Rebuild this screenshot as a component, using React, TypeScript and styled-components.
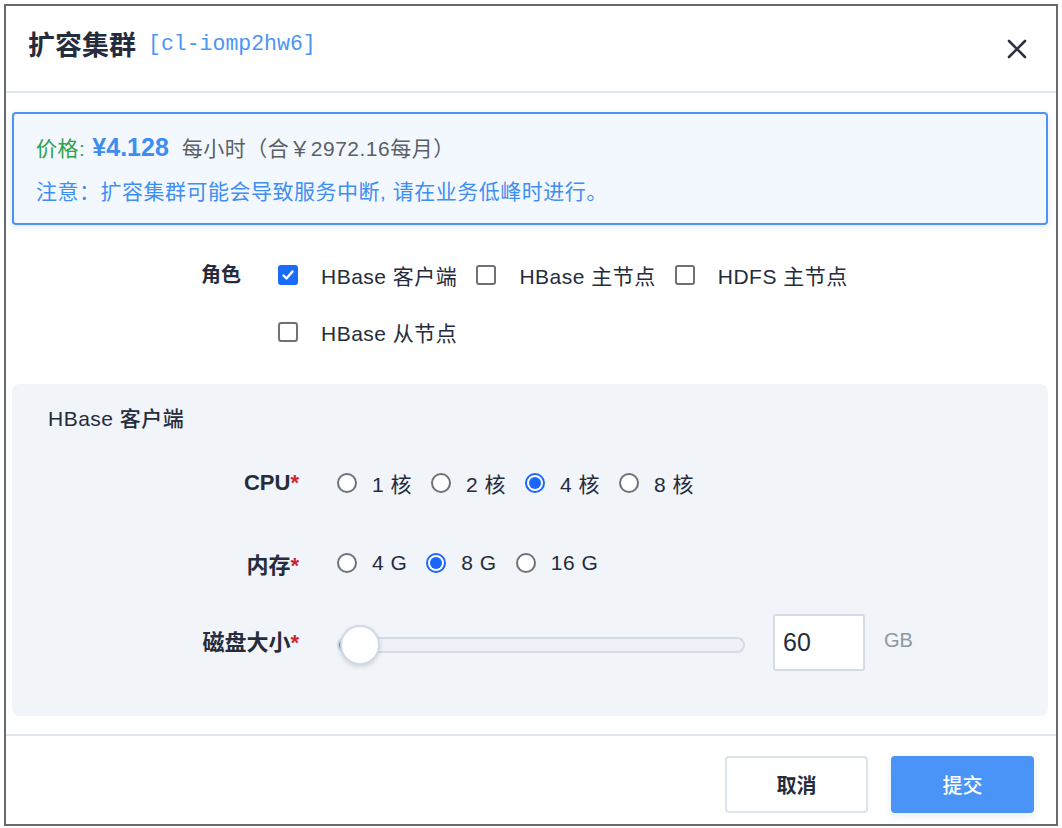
import styled, { createGlobalStyle } from "styled-components";

const GlobalStyle = createGlobalStyle`
  body {
    margin: 0;
    background: #fff;
    font-family: "Liberation Sans", "Noto Sans CJK SC", sans-serif;
    color: #252c3b;
  }
  * { box-sizing: border-box; }
`;

const roles = [
  { name: "HBase 客户端", checked: true },
  { name: "HBase 主节点", checked: false },
  { name: "HDFS 主节点", checked: false },
  { name: "HBase 从节点", checked: false },
];

const cpus = ["1 核", "2 核", "4 核", "8 核"];
const mems = ["4 G", "8 G", "16 G"];

function App() {
  return (
    <Page>
      <GlobalStyle />
      <Modal>
        <Header>
          <Title>
            扩容集群 <ClusterId>[cl-iomp2hw6]</ClusterId>
          </Title>
          <CloseButton>
            <svg width="20" height="20" viewBox="0 0 20 20">
              <path d="M2 2L18 18M18 2L2 18" stroke="#2b3242" strokeWidth="2.6" strokeLinecap="round" />
            </svg>
          </CloseButton>
        </Header>

        <Body>
          <Alert>
            <AlertLine>
              <PriceLabel>价格:</PriceLabel>
              <Price>¥4.128</Price>
              <PriceNote>每小时（合￥2972.16每月）</PriceNote>
            </AlertLine>
            <AlertLine>
              <Notice>注意：扩容集群可能会导致服务中断, 请在业务低峰时进行。</Notice>
            </AlertLine>
          </Alert>

          <RoleRow>
            <RoleLabel>角色</RoleLabel>
            <RoleOptions>
              {roles.map((r) => (
                <CheckOption key={r.name}>
                  <CheckBox $checked={r.checked}>
                    {r.checked ? (
                      <svg width="16" height="16" viewBox="0 0 16 16">
                        <path d="M3.5 8.5l3 3L12.5 4.5" stroke="#fff" strokeWidth="2.4" fill="none" strokeLinecap="round" strokeLinejoin="round" />
                      </svg>
                    ) : null}
                  </CheckBox>
                  <OptionText>{r.name}</OptionText>
                </CheckOption>
              ))}
            </RoleOptions>
          </RoleRow>

          <Panel>
            <PanelTitle>HBase 客户端</PanelTitle>

            <FormRow $mt={28} $h={50}>
              <FieldLabel>
                CPU<Star>*</Star>
              </FieldLabel>
              <Controls>
                {cpus.map((c) => (
                  <RadioOption key={c}>
                    <Radio $checked={c === "4 核"} />
                    <OptionText>{c}</OptionText>
                  </RadioOption>
                ))}
              </Controls>
            </FormRow>

            <FormRow $mt={30} $h={50}>
              <FieldLabel>
                内存<Star>*</Star>
              </FieldLabel>
              <Controls>
                {mems.map((m) => (
                  <RadioOption key={m}>
                    <Radio $checked={m === "8 G"} />
                    <OptionText>{m}</OptionText>
                  </RadioOption>
                ))}
              </Controls>
            </FormRow>

            <FormRow $mt={26} $h={57}>
              <FieldLabel $lift>
                磁盘大小<Star>*</Star>
              </FieldLabel>
              <Controls>
                <Track>
                  <TrackFill />
                  <Thumb />
                </Track>
                <SizeInput readOnly value="60" />
                <Unit>GB</Unit>
              </Controls>
            </FormRow>
          </Panel>
        </Body>

        <Footer>
          <Button>取消</Button>
          <Button $primary>提交</Button>
        </Footer>
      </Modal>
    </Page>
  );
}

const Page = styled.div`
  padding: 4px;
`;

const Modal = styled.div`
  width: 1054px;
  height: 822px;
  border: 2px solid #676a71;
  background: #fff;
  display: flex;
  flex-direction: column;
`;

const Header = styled.div`
  height: 87px;
  padding: 0 29px 0 22px;
  display: flex;
  align-items: center;
  justify-content: space-between;
  border-bottom: 2px solid #e0e6ee;
`;

const Title = styled.div`
  font-size: 27px;
  font-weight: 700;
  color: #252c3b;
  display: flex;
  align-items: center;
  gap: 12px;
  margin-bottom: 10px;
`;

const ClusterId = styled.span`
  font-family: "Liberation Mono", monospace;
  font-size: 21.5px;
  font-weight: 400;
  color: #4b95f5;
`;

const CloseButton = styled.div`
  width: 20px;
  height: 20px;
  display: flex;
`;

const Body = styled.div`
  padding: 19px 8px 18px 6px;
`;

const Alert = styled.div`
  border: 2px solid #4a94f7;
  border-radius: 4px;
  background: #f3f8ff;
  box-shadow: 0 2px 6px rgba(40, 60, 90, 0.12);
  padding: 18px 22px;
  display: flex;
  flex-direction: column;
  gap: 13px;
`;

const AlertLine = styled.div`
  height: 30px;
  display: flex;
  align-items: center;
  font-size: 21px;
  letter-spacing: 0.5px;
`;

const PriceLabel = styled.span`
  color: #2fa24c;
`;

const Price = styled.span`
  color: #3d8ef0;
  font-size: 25px;
  font-weight: 700;
  letter-spacing: 0;
  margin: 0 13px 0 7px;
`;

const PriceNote = styled.span`
  color: #5b5f66;
`;

const Notice = styled.span`
  color: #3f8ef4;
`;

const RoleRow = styled.div`
  display: flex;
  margin-top: 31px;
`;

const RoleLabel = styled.div`
  width: 229px;
  text-align: right;
  line-height: 38px;
  font-size: 20px;
  font-weight: 700;
  margin-right: 37px;
`;

const RoleOptions = styled.div`
  width: 610px;
  display: flex;
  flex-wrap: wrap;
  row-gap: 19px;
`;

const CheckOption = styled.div`
  height: 38px;
  display: flex;
  align-items: center;
  gap: 23px;
  margin-right: 19px;
`;

const CheckBox = styled.div<{ $checked?: boolean }>`
  width: 20px;
  height: 20px;
  border-radius: 3px;
  border: 2px solid ${(p) => (p.$checked ? "#1a6bf5" : "#6e7178")};
  background: ${(p) => (p.$checked ? "#1a6bf5" : "#fff")};
  display: flex;
  align-items: center;
  justify-content: center;
`;

const OptionText = styled.span`
  font-size: 21px;
  letter-spacing: 0.5px;
  color: #252c3b;
  white-space: nowrap;
`;

const Panel = styled.div`
  margin-top: 33px;
  height: 332px;
  background: #f1f4f9;
  border-radius: 8px;
  padding-top: 24px;
`;

const PanelTitle = styled.div`
  padding-left: 36px;
  font-size: 21px;
  letter-spacing: 0.5px;
  line-height: 22px;
  font-weight: 500;
`;

const FormRow = styled.div<{ $mt: number; $h: number }>`
  margin-top: ${(p) => p.$mt}px;
  height: ${(p) => p.$h}px;
  display: flex;
  align-items: center;
`;

const FieldLabel = styled.div<{ $lift?: boolean }>`
  width: 287px;
  text-align: right;
  font-size: 22px;
  font-weight: 700;
  margin-right: 38px;
  margin-bottom: ${(p) => (p.$lift ? "5px" : "0")};
`;

const Star = styled.span`
  color: #c8262b;
`;

const Controls = styled.div`
  display: flex;
  align-items: center;
`;

const RadioOption = styled.div`
  display: flex;
  align-items: center;
  gap: 15px;
  margin-right: 19px;
`;

const Radio = styled.div<{ $checked?: boolean }>`
  width: 20px;
  height: 20px;
  border-radius: 50%;
  border: 2px solid ${(p) => (p.$checked ? "#1a66ff" : "#6e7178")};
  background: #fff;
  display: flex;
  align-items: center;
  justify-content: center;
  &::after {
    content: "";
    display: ${(p) => (p.$checked ? "block" : "none")};
    width: 12px;
    height: 12px;
    border-radius: 50%;
    background: #1a66ff;
  }
`;

const Track = styled.div`
  position: relative;
  width: 408px;
  height: 16px;
  border: 2px solid #d3dbe6;
  border-radius: 8px;
  background: #eef1f7;
  margin-top: 4px;
`;

const TrackFill = styled.div`
  width: 16px;
  height: 100%;
  border-radius: 8px 0 0 8px;
  background: #3d8ef0;
`;

const Thumb = styled.div`
  position: absolute;
  left: 1px;
  top: 50%;
  width: 40px;
  height: 40px;
  margin-top: -20px;
  border-radius: 50%;
  background: #fff;
  border: 2px solid #d0d9e4;
  box-shadow: 0 2px 4px rgba(60, 110, 90, 0.2);
`;

const SizeInput = styled.input`
  margin-left: 28px;
  width: 92px;
  height: 57px;
  border: 2px solid #d2dbe6;
  border-radius: 3px;
  background: #fff;
  padding-left: 8px;
  font-family: inherit;
  font-size: 25px;
  color: #252c3b;
  outline: none;
`;

const Unit = styled.span`
  margin-left: 19px;
  margin-top: -4px;
  font-size: 20px;
  color: #8d97a4;
`;

const Footer = styled.div`
  flex: 1;
  border-top: 2px solid #e0e6ee;
  padding: 20px 22px 0;
  display: flex;
  justify-content: flex-end;
  align-items: flex-start;
  gap: 23px;
`;

const Button = styled.button<{ $primary?: boolean }>`
  width: 143px;
  height: 57px;
  border-radius: 4px;
  font-family: inherit;
  font-size: 20px;
  font-weight: ${(p) => (p.$primary ? 500 : 700)};
  color: ${(p) => (p.$primary ? "#fff" : "#252c3b")};
  background: ${(p) => (p.$primary ? "#4a94f7" : "#fff")};
  border: ${(p) => (p.$primary ? "none" : "2px solid #dbe3ec")};
  box-shadow: ${(p) => (p.$primary ? "0 3px 8px rgba(80, 170, 140, 0.18)" : "none")};
`;

export default App;
